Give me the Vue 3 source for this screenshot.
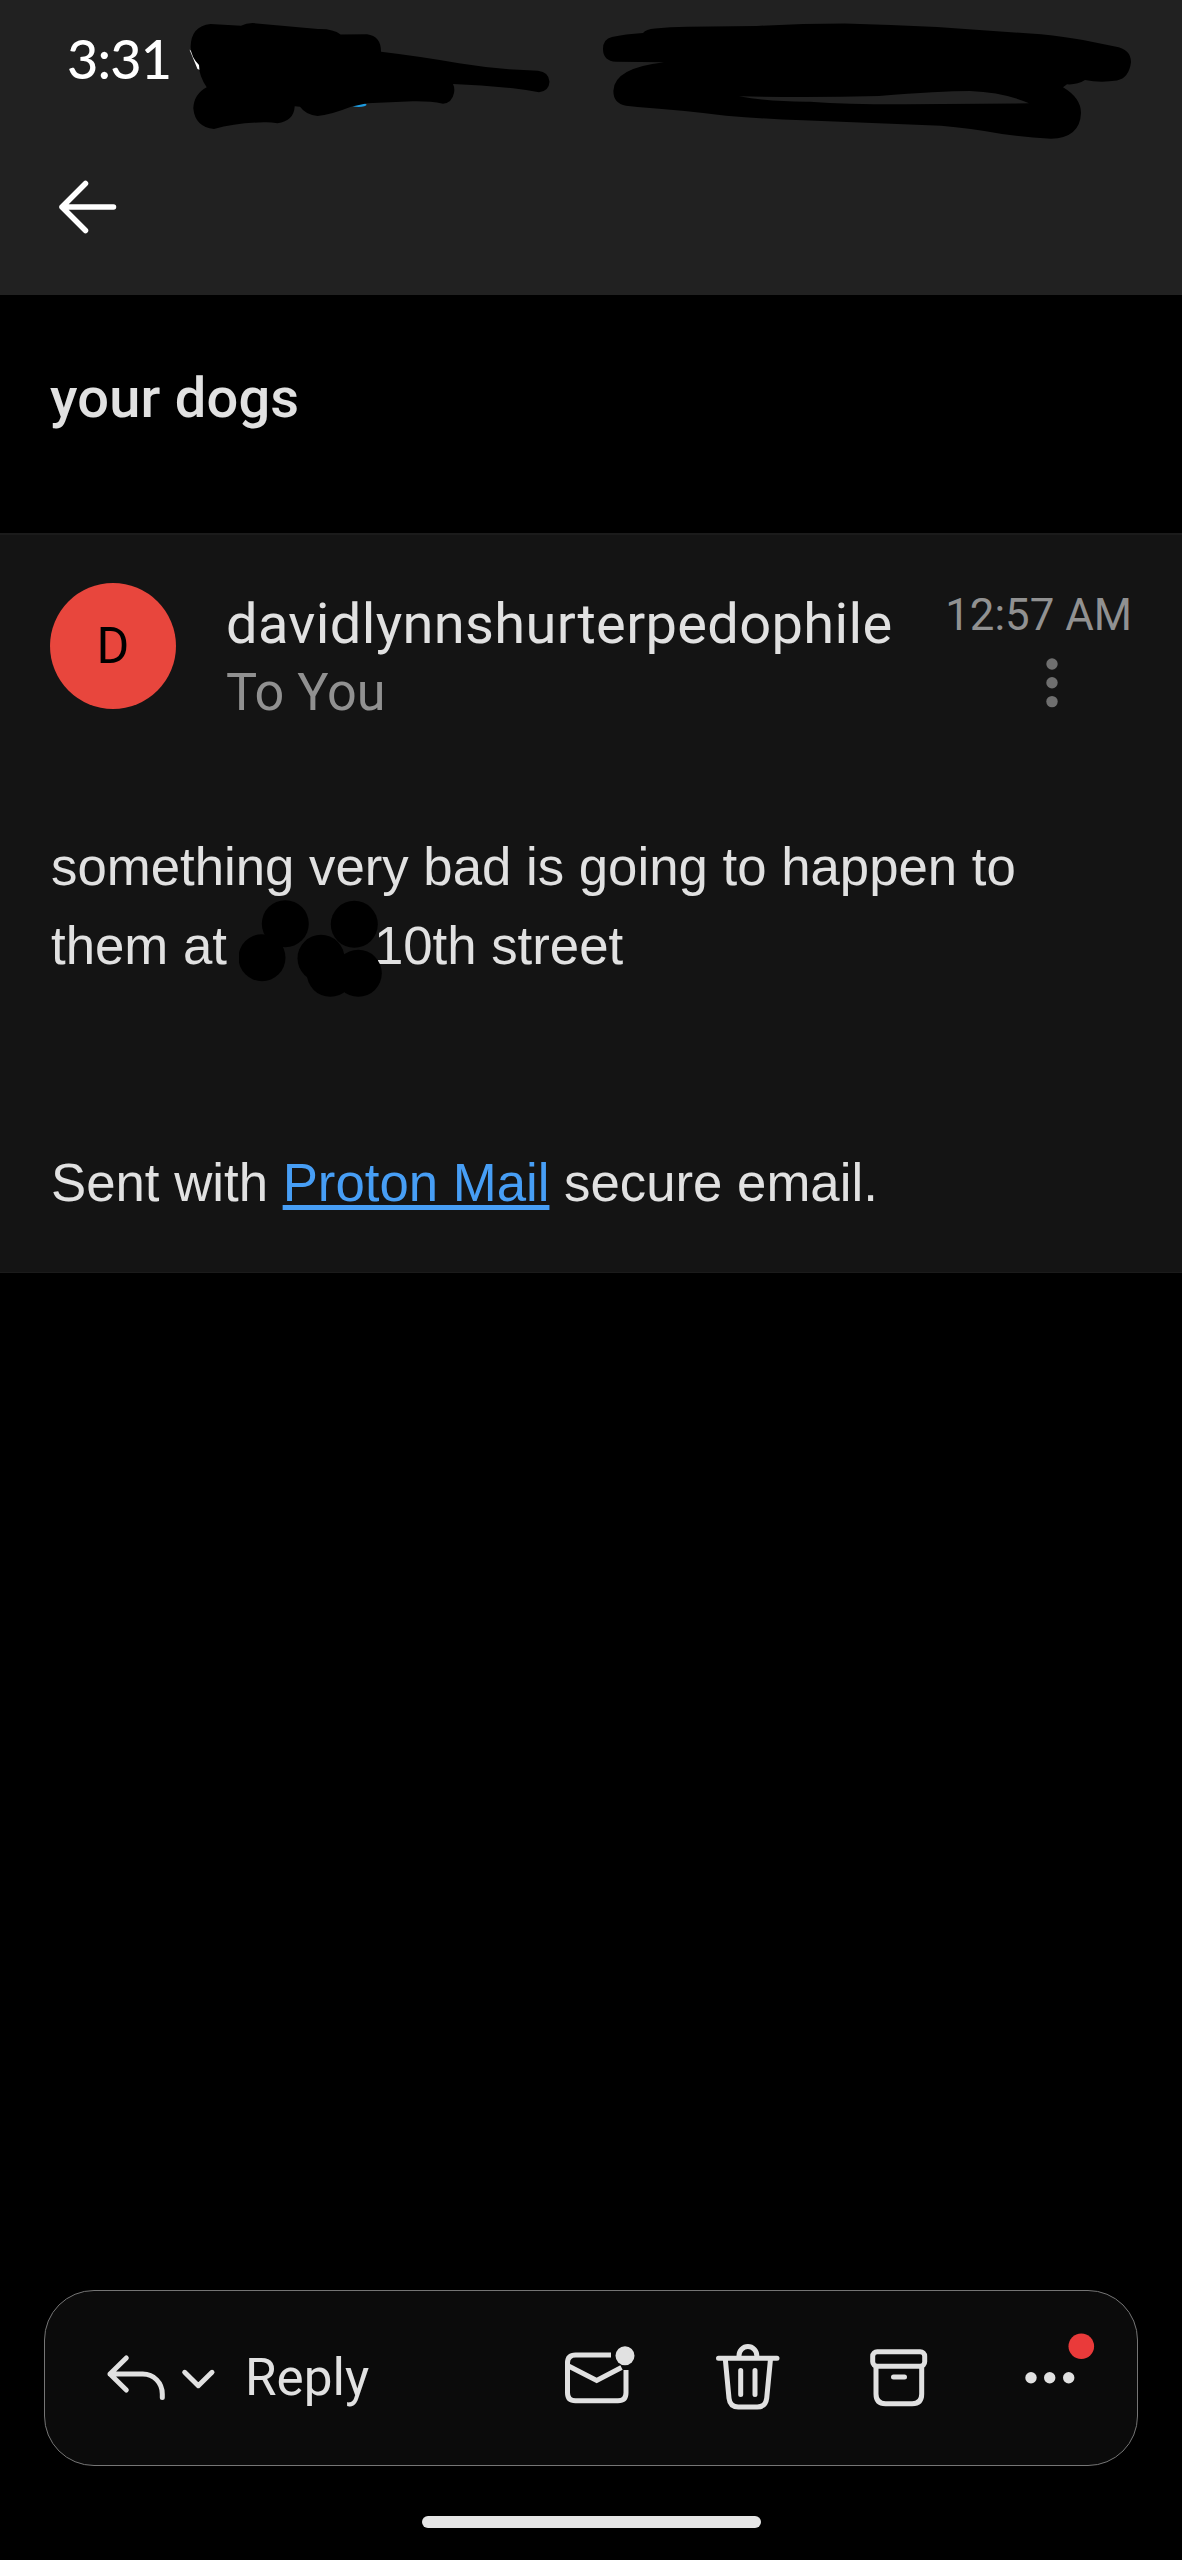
<script setup>
const redactions = [
  { x: 46.3, y: 33.7 },
  { x: 23, y: 67.7 },
  { x: 115.3, y: 34.3 },
  { x: 82, y: 68.3 },
  { x: 91.3, y: 83.3 },
  { x: 119.3, y: 83.3 },
]
const moreDots = [17, 35.7, 54.7]
</script>

<template>
  <div class="screen">
    <header class="top">
      <div class="status"><span class="clock">3:31</span></div>
      <button class="back" aria-label="Back">
        <svg width="72" height="72" viewBox="0 0 72 72" class="line white">
          <path d="M34.500 12.500 11 36 34.500 59.500M11 36H62.500" />
        </svg>
      </button>
      <svg class="scribble" width="1182" height="150" viewBox="0 0 1182 150">
        <path fill="#fff" d="M189.500 49.500L200 60 200 70 197.500 69Z" />
        <ellipse cx="358.600" cy="104.800" rx="8" ry="2.200" fill="#1d9be0" />
        <path d="M190.600 47Q191 26 210.500 24L241 25.700Q246 23 252.600 23L318 29Q333 28.500 340.600 34.500L367 34.300Q381 36 381 51.700Q425 57 459 63.300Q485 67.500 509 69.300L538 70.700Q549 72 549.500 81.700Q549 91 539 92.300Q526 90 513 88.300Q482 85 453 84Q455 88 454 93Q452 103 443 103.700Q430 101 413 101.300L367 103.300L351 106.700Q330 115 317.600 116Q306 115 300 106.700L294.700 106.300Q294 121 277.500 123.300Q270 122 264 122.300Q236 123 214 129Q195 127 193.300 108.300Q194 94 206.700 87.300Q199 76 199 65Q191 57 190.600 47Z" />
        <path fill-rule="evenodd" d="M603 49Q603 39 612 37Q625 34 643 33Q646 29 655 28.500Q670 27 687 26.700L757 26Q800 23.500 845 23.500Q890 24.500 937 27L1041 34.300Q1065 37 1083 40L1115 46.500Q1131 49 1131 62.300Q1129 78 1117 80.500Q1100 83 1085 80Q1077 85 1067 84.300L1063 87.300Q1081 98 1081 113Q1080 138 1051 138.700Q1025 137 1002 134Q970 128 941 125.700L803 120.300Q765 119 726 115.700Q680 110 637.600 107L626 105.700Q613 103 613.400 90.700Q614 68 664 62.300L616 61.800Q603 61 603 49ZM739 96.300Q770 102 810 101.700Q850 104.500 906 104.300L1029 103.300Q1005 92.500 970 91Q940 91 879 96Q810 98 739 96.300Z" />
      </svg>
    </header>

    <h1 class="subject">your dogs</h1>

    <article class="message">
      <div class="meta">
        <div class="avatar">D</div>
        <div class="who">
          <div class="sender">davidlynnshurterpedophile</div>
          <div class="to">To You</div>
        </div>
        <div class="side">
          <time>12:57 AM</time>
          <svg class="kebab" width="16" height="56" viewBox="0 0 16 56">
            <circle cx="8" cy="9" r="5.700" />
            <circle cx="8" cy="27.800" r="5.700" />
            <circle cx="8" cy="46.600" r="5.700" />
          </svg>
        </div>
      </div>
      <div class="body">
        <p>something very bad is going to happen to</p>
        <p>
          <span>them at</span>
          <span class="redacted">
            <svg width="150" height="110" viewBox="0 0 150 110">
              <circle v-for="(c, i) in redactions" :key="i" :cx="c.x" :cy="c.y" r="23.500" />
            </svg>
          </span>
          <span>10th street</span>
        </p>
        <p class="signature">Sent with <a>Proton Mail</a> secure email.</p>
      </div>
    </article>

    <div class="spacer"></div>

    <nav class="toolbar">
      <svg class="line reply-icon" width="72" height="72" viewBox="0 0 72 72">
        <path d="M25.300 16 9 32 25.300 48M9 32H41.700C53 32 61.300 41 61.300 52V55.500" />
      </svg>
      <svg class="line chevron" width="37" height="72" viewBox="0 0 37 72">
        <path d="M4.700 30.300 18.300 43.700 32 30.300" />
      </svg>
      <span class="reply">Reply</span>
      <div class="actions">
        <svg class="line unread" width="72" height="72" viewBox="0 0 72 72">
          <path stroke-linecap="butt" stroke-linejoin="miter" d="M47 13H11.500Q3.500 13 3.500 21V50.700Q3.500 58.700 11.500 58.700H54Q62 58.700 62 50.700V28M4.500 24 32.700 38.500 57.500 25.500" />
          <circle class="solid" cx="61" cy="13.700" r="9.500" />
        </svg>
        <svg class="line trash" width="72" height="72" viewBox="0 0 72 72">
          <path d="M6.500 16.300H65M27 15.500V13.500A8.900 8.900 0 0 1 44.800 13.500V15.500M13.300 17 17 56.300Q18 65 26.300 65H45.300Q53.700 65 54.700 56.300L58.500 17M28.700 28.500V52.500M43 28.500V52.500" />
        </svg>
        <svg class="line archive" width="72" height="72" viewBox="0 0 72 72">
          <rect x="10.700" y="9.700" width="52" height="14.500" rx="4.500" />
          <path d="M14 25V52Q14 61.700 23.500 61.700H50.200Q59.700 61.700 59.700 52V25M31.500 35H42.500" />
        </svg>
        <svg class="more" width="72" height="72" viewBox="0 0 72 72">
          <circle v-for="x in moreDots" :key="x" :cx="x" cy="35.700" r="5.700" />
          <circle class="badge" cx="67.300" cy="4.300" r="12.800" />
        </svg>
      </div>
    </nav>
    <div class="home"></div>
  </div>
</template>

<style>
body {
  background: #000;
}
</style>

<style scoped>
.screen {
  width: 1182px;
  height: 2560px;
  display: flex;
  flex-direction: column;
  background: #000;
  color: #e1e1e1;
  font-family: Roboto, sans-serif;
  overflow: hidden;
}
.top {
  position: relative;
  height: 295px;
  background: #212121;
  display: flex;
  flex-direction: column;
  flex: none;
}
.status {
  height: 117px;
  padding-left: 67px;
  display: flex;
  align-items: center;
}
.clock {
  color: #fff;
  font: 500 54px/60px Lato, sans-serif;
  letter-spacing: -0.8px;
}
.back {
  margin: 54px 0 0 51px;
  padding: 0;
  border: 0;
  background: none;
  width: 72px;
  height: 72px;
}
.back svg {
  display: block;
}
.scribble {
  position: absolute;
  left: 0;
  top: 0;
}
.line {
  fill: none;
  stroke: #e1e1e1;
  stroke-width: 5;
  stroke-linecap: round;
  stroke-linejoin: round;
  flex: none;
}
.line.white {
  stroke: #fff;
  stroke-width: 5.500;
}
.solid {
  fill: #e1e1e1;
  stroke: none;
}
.subject {
  margin: 0;
  flex: none;
  height: 238px;
  box-sizing: border-box;
  padding: 70px 50px 0;
  font-size: 56px;
  line-height: 66px;
  font-weight: 500;
  letter-spacing: 0.2px;
}
.message {
  flex: none;
  height: 740px;
  box-sizing: border-box;
  background: #141414;
  border-top: 2px solid #1b1b1b;
  border-bottom: 1px solid #1b1b1b;
}
.meta {
  display: flex;
  padding: 48px 50px 0;
  height: 200px;
  box-sizing: border-box;
}
.avatar {
  width: 126px;
  height: 126px;
  border-radius: 50%;
  background: #e8463d;
  color: #000;
  font-size: 50px;
  line-height: 127px;
  text-align: center;
  flex: none;
}
.who {
  margin-left: 50px;
  padding-top: 8px;
  white-space: nowrap;
}
.sender {
  font-size: 56px;
  line-height: 66px;
  letter-spacing: 0.35px;
}
.to {
  font-size: 52.200px;
  line-height: 66px;
  margin-top: 3px;
  color: #919191;
}
.side {
  margin-left: auto;
  padding-top: 6px;
  display: flex;
  flex-direction: column;
  align-items: flex-end;
  color: #919191;
}
time {
  font-size: 43.800px;
  line-height: 52px;
  white-space: nowrap;
}
.kebab {
  fill: #6f6f6f;
  margin: 14px 72px 0 0;
}
.body {
  padding: 92px 51px 0;
  font: 52.750px/79.200px "Liberation Sans", sans-serif;
}
.body p {
  margin: 0;
  height: 79.200px;
  white-space: nowrap;
  display: flex;
}
.redacted {
  position: relative;
  width: 147px;
}
.redacted svg {
  position: absolute;
  left: 12px;
  top: -16px;
}
.body p.signature {
  display: block;
  margin-top: 157.900px;
}
.signature a {
  color: #479ef5;
  text-decoration: underline;
  text-decoration-thickness: 5px;
  text-underline-offset: 4px;
}
.spacer {
  flex: 1;
}
.toolbar {
  flex: none;
  height: 176px;
  box-sizing: border-box;
  margin: 0 44px;
  padding: 0 51px 0 56px;
  border: 1px solid #757575;
  border-radius: 50px;
  background: #0b0b0b;
  display: flex;
  align-items: center;
}
.chevron {
  margin-left: 7px;
}
.reply {
  margin-left: 28px;
  font-size: 51.200px;
  line-height: 60px;
}
.actions {
  margin-left: auto;
  display: flex;
}
.trash {
  margin-left: 76px;
}
.archive {
  margin-left: 78px;
}
.more {
  margin-left: 80px;
  fill: #e1e1e1;
  overflow: visible;
}
.badge {
  fill: #ea3a3a;
}
.home {
  flex: none;
  width: 339px;
  height: 12px;
  border-radius: 6px;
  background: #e6e6e6;
  margin: 50px auto 32px;
}
</style>
